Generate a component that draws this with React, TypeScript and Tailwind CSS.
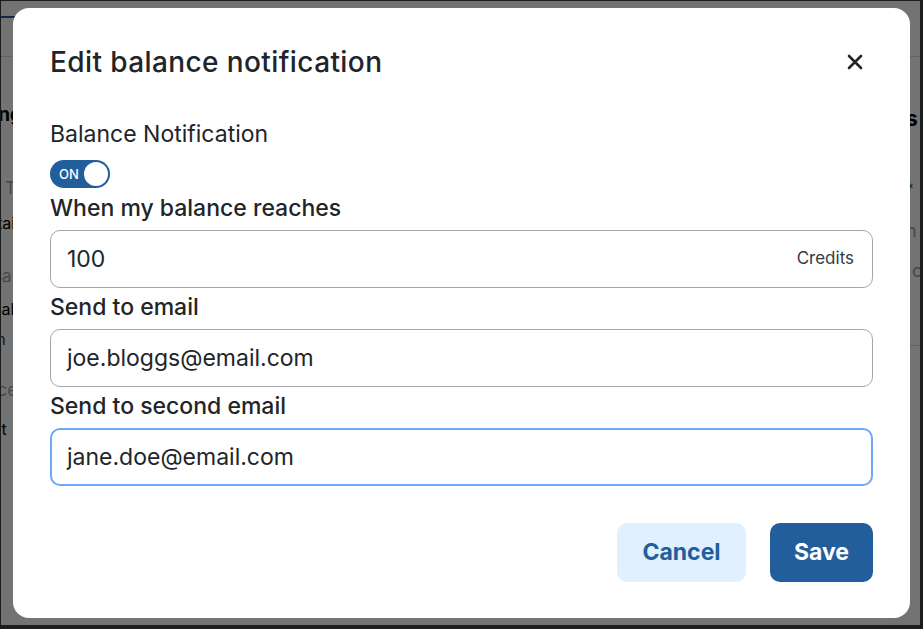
import React from "react";

function LeftRow({ h, children }: { h: string; children?: React.ReactNode }) {
  return <div className={`${h} flex items-center whitespace-nowrap`}>{children}</div>;
}

export default function App() {
  return (
    <div className="relative w-[923px] h-[629px] overflow-hidden border-l border-t border-r-[3px] border-b-[4px] border-[#1c1c1c] bg-white font-['Inter','Noto_Sans',sans-serif] text-[#212529]">
      {/* background page */}
      <div className="flex flex-col w-full h-full">
        <div className="h-[56px] border-b border-[#d6d9dd] flex flex-col">
          <div className="h-[17px] w-[60px] border-b-2 border-[#235e9c]" />
        </div>
        <div className="flex flex-1 justify-between">
          <div className="flex flex-col w-[40px]">
            <LeftRow h="h-[40px] mt-[38px]">
              <span className="-ml-[36px] text-[19px] font-bold text-black">Billing</span>
            </LeftRow>
            <LeftRow h="h-[34px] mt-[37px]">
              <span className="ml-[4px] text-[17px] text-[#9aa0a6]">Type</span>
            </LeftRow>
            <LeftRow h="h-[34px]">
              <span className="-ml-[25px] text-[16px] text-black">Details</span>
            </LeftRow>
            <LeftRow h="h-[34px] mt-[20px]">
              <span className="-ml-[10px] text-[17px] text-[#9aa0a6]">Balance</span>
            </LeftRow>
            <LeftRow h="h-[30px]">
              <span className="-ml-[10px] text-[16px] text-black">Balance</span>
            </LeftRow>
            <LeftRow h="h-[30px]">
              <span className="-ml-[36px] text-[16px] text-[#1d3f66]">Open</span>
            </LeftRow>
            <LeftRow h="h-[34px] mt-[20px]">
              <span className="-ml-[28px] text-[17px] text-[#9aa0a6]">Place</span>
            </LeftRow>
            <LeftRow h="h-[30px] mt-[6px]">
              <span className="-ml-[19px] text-[16px] text-black">Set</span>
              <span className="ml-[6px] w-[6px] h-[6px] rounded-full bg-[#f5b400]" />
            </LeftRow>
          </div>
          <div className="flex flex-col w-[14px]">
            <LeftRow h="h-[40px] mt-[42px]">
              <span className="text-[21px] font-bold text-black">s</span>
            </LeftRow>
            <LeftRow h="h-[30px] mt-[35px]">
              <span className="text-[15px] text-[#1d3f66]">*</span>
            </LeftRow>
            <LeftRow h="h-[36px] mt-[8px]">
              <span className="text-[18px] text-[#9aa0a6]">n</span>
            </LeftRow>
            <LeftRow h="h-[36px] mt-[4px]">
              <span className="ml-[6px] text-[18px] text-[#9aa0a6]">c</span>
            </LeftRow>
            <div className="mt-[57px] border-b border-[#d6d9dd]" />
          </div>
        </div>
      </div>

      {/* overlay */}
      <div className="absolute inset-0 bg-black/55 flex items-center justify-center pl-[2px]">
        <div className="w-[897px] h-[610px] rounded-[16px] bg-white px-[37px] pt-[36px] pb-[36px] flex flex-col">
          <div className="h-[36px] flex items-center justify-between">
            <h2 className="text-[28px] leading-[36px] font-medium tracking-[0.4px] text-[#212529]">
              Edit balance notification
            </h2>
            <button className="mr-[10px] w-[16px] h-[16px] flex items-center justify-center text-[#212529]">
              <svg width="16" height="16" viewBox="0 0 16 16" fill="none">
                <path d="M2 2L14 14M14 2L2 14" stroke="currentColor" strokeWidth="2.6" strokeLinecap="round" />
              </svg>
            </button>
          </div>

          <div className="mt-[36px] flex flex-col">
            <div className="text-[23px] leading-[36px] text-[#212529]">Balance Notification</div>
            <div className="mt-[8px] w-[60px] h-[28px] rounded-full bg-[#235e9c] flex items-center justify-between pl-[9px] pr-[2px]">
              <span className="text-[13px] font-medium text-white leading-none">ON</span>
              <span className="w-[24px] h-[24px] rounded-full bg-white" />
            </div>

            <div className="mt-[2px] text-[23px] leading-[36px] font-medium text-[#212529]">When my balance reaches</div>
            <div className="mt-[4px] h-[58px] rounded-[10px] border border-[#a3a7ab] pl-[16px] pr-[18px] flex items-center justify-between">
              <span className="text-[23px] text-[#212529]">100</span>
              <span className="text-[17px] text-[#343a40]">Credits</span>
            </div>

            <div className="mt-[1px] text-[23px] leading-[36px] font-medium text-[#212529]">Send to email</div>
            <div className="mt-[4px] h-[58px] rounded-[10px] border border-[#a3a7ab] pl-[16px] flex items-center">
              <span className="text-[23px] text-[#212529]">joe.bloggs@email.com</span>
            </div>

            <div className="mt-[1px] text-[23px] leading-[36px] font-medium text-[#212529]">Send to second email</div>
            <div className="mt-[4px] h-[58px] rounded-[10px] border-2 border-[#6ea8f6] pl-[15px] flex items-center">
              <span className="text-[23px] text-[#212529]">jane.doe@email.com</span>
            </div>
          </div>

          <div className="mt-[37px] flex justify-end gap-[24px]">
            <button className="w-[129px] h-[59px] rounded-[10px] bg-[#e0f0fe] text-[#235e9c] text-[23px] font-bold">
              Cancel
            </button>
            <button className="w-[103px] h-[59px] rounded-[10px] bg-[#235e9c] text-white text-[23px] font-bold">
              Save
            </button>
          </div>
        </div>
      </div>
    </div>
  );
}
